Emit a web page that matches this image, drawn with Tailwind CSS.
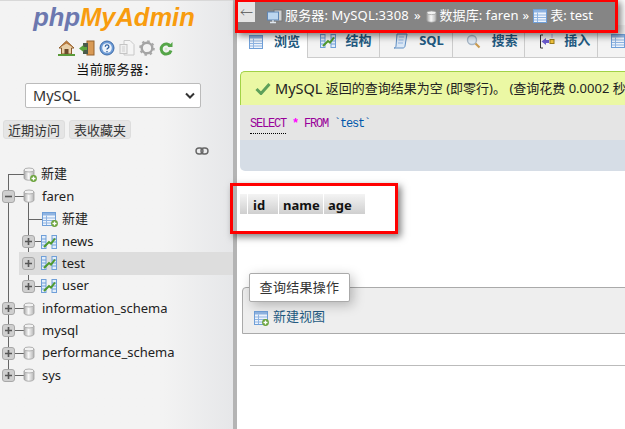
<!DOCTYPE html>
<html lang="zh-CN">
  <head>
    <meta charset="UTF-8" />
    <title>phpMyAdmin</title>
    <script src="https://cdn.jsdelivr.net/npm/@tailwindcss/browser@4"></script>
  </head>
  <body class="w-[625px] h-[429px] overflow-hidden bg-white font-['Noto_Sans','Noto_Sans_CJK_SC',sans-serif] text-[13px] text-[#222]">
    <svg class="absolute w-0 h-0">
      <defs>
        <linearGradient id="cyl" x1="0" x2="1" y1="0" y2="0">
          <stop offset="0" stop-color="#a8a8a8" /><stop offset=".45" stop-color="#f8f8f8" /><stop offset="1" stop-color="#b4b4b4" />
        </linearGradient>
        <symbol id="db" viewBox="0 0 12 14">
          <path d="M1 3v8c0 1.300 2.200 2.200 5 2.200s5-.9 5-2.200V3z" fill="url(#cyl)" stroke="#a0a0a0" stroke-width=".8" />
          <ellipse cx="6" cy="3" rx="5" ry="2" fill="#f2f2f2" stroke="#a0a0a0" stroke-width=".8" />
        </symbol>
        <symbol id="plus-badge" viewBox="0 0 7 7">
          <circle cx="3.500" cy="3.500" r="3.400" fill="#6aa33a" />
          <path d="M3.500 1.500v4M1.500 3.500h4" stroke="#fff" stroke-width="1.300" />
        </symbol>
        <symbol id="plus" viewBox="0 0 13 13">
          <rect x=".5" y=".5" width="12" height="12" rx="2.500" fill="#cfcfcf" stroke="#a8a8a8" />
          <path d="M6.500 3v7M3 6.500h7" stroke="#555" stroke-width="1.600" />
        </symbol>
        <symbol id="minus" viewBox="0 0 13 13">
          <rect x=".5" y=".5" width="12" height="12" rx="2.500" fill="#cfcfcf" stroke="#a8a8a8" />
          <path d="M3 6.500h7" stroke="#555" stroke-width="1.600" />
        </symbol>
        <symbol id="tbl-struct" viewBox="0 0 16 14">
          <rect x=".5" y=".5" width="4.500" height="13" fill="#e3eefa" stroke="#6f9fd8" />
          <rect x="11" y=".5" width="4.500" height="13" fill="#e3eefa" stroke="#6f9fd8" />
          <path d="M1 4h4M1 7h4M1 10h4M11 4h4M11 7h4M11 10h4" stroke="#6f9fd8" />
          <path d="M3 12 8 7l2 1.500 4-5" fill="none" stroke="#4f9a2c" stroke-width="2" />
        </symbol>
        <symbol id="tbl" viewBox="0 0 14 14">
          <rect x=".5" y=".5" width="13" height="13" fill="#eef4fc" stroke="#6f9fd8" />
          <path d="M1 1h12v2.500H1z" fill="#8fb4e2" />
          <path d="M1 6h12M1 8.500h12M1 11h12M4.500 3.500V13" stroke="#8fb4e2" />
        </symbol>
      </defs>
    </svg>

    <div class="flex h-[429px]">
      <!-- navigation panel -->
      <aside class="w-[233px] shrink-0 h-full bg-gradient-to-r from-[#f3f3f3] from-70% to-[#e6e7e9]">
        <div class="h-[1px] bg-[#d8d8d8]"></div>
        <div class="h-[37px] text-center font-['Liberation_Sans',sans-serif] italic font-bold text-[25.500px] leading-[33px] pr-[5px]">
          <span class="text-[#6c78af]">php</span><span class="text-[#f89c0e]">MyAdmin</span>
        </div>

        <div class="flex justify-center items-center gap-[4px] h-[16px] mt-[2px] mr-[2px]">
          <svg width="17" height="16" viewBox="0 0 17 16"><path d="M1 8 8.500 1 16 8h-2.500v6h-10V8z" fill="#e8cfa8" stroke="#8a5a2a" /><path d="M1 8 8.500 1 16 8 8.500 3.500z" fill="#b5763a" /><rect x="6.500" y="9" width="4" height="5" fill="#6b4a2a" /><path d="M0 15h17" stroke="#5a9a3a" stroke-width="2" /></svg>
          <svg width="16" height="16" viewBox="0 0 16 16"><rect x="8" y="1" width="7" height="14" fill="#d99a55" stroke="#96632c" /><rect x="4" y="3" width="5" height="11" fill="#4a5a4a" /><path d="M0 8.500 4.500 5v2H8v3H4.500v2z" fill="#5aa53c" /></svg>
          <svg width="16" height="16" viewBox="0 0 16 16"><circle cx="8" cy="8" r="7" fill="#6d9bd6" stroke="#3d6ba8" /><circle cx="8" cy="8" r="4.800" fill="#eef4fb" /><path d="M6.300 6.700a1.800 1.800 0 1 1 2.500 1.600c-.6.300-.8.600-.8 1.200M8 11v1.200" fill="none" stroke="#2e5f9e" stroke-width="1.300" /></svg>
          <svg width="16" height="16" viewBox="0 0 16 16"><path d="M5 .5h6l4 4V15H5z" fill="#f5f5f5" stroke="#c8c8c8" /><rect x="1" y="4.500" width="7" height="9" fill="#f0f0f0" stroke="#c4c4c4" /><path d="M3 7h3M3 9h3M3 11h3" stroke="#cfcfcf" /></svg>
          <svg width="16" height="16" viewBox="0 0 16 16"><circle cx="8" cy="8" r="5.300" fill="none" stroke="#a4a4a4" stroke-width="2.400" /><circle cx="8" cy="8" r="6.800" fill="none" stroke="#a8a8a8" stroke-width="2" stroke-dasharray="2.500 2.840" /></svg>
          <svg width="14" height="15" viewBox="0 0 14 15"><path d="M11.500 5.500A5 5 0 1 0 12 9.500" fill="none" stroke="#55a548" stroke-width="3" /><path d="M8.500 6h5V1z" fill="#55a548" /><circle cx="7" cy="8" r="1.500" fill="#d6ecd0" /></svg>
        </div>

        <div class="text-center text-[13px] leading-[18px] mt-[4px] text-[#111] tracking-[.4px]">当前服务器：</div>
        <div class="mx-[25px] mt-[5px] h-[25px] w-[176px] bg-white border border-[#bbb] rounded-[2px] flex items-center justify-between pl-[7px] pr-[5px] text-[#333] text-[14.500px]">
          <span>MySQL</span>
          <svg width="10" height="7" viewBox="0 0 10 7"><path d="M1 1.500 5 5.500 9 1.500" fill="none" stroke="#333" stroke-width="2" /></svg>
        </div>
        <div class="flex gap-[4px] ml-[3px] mt-[12px]">
          <span class="h-[19px] px-[4px] leading-[18px] bg-[#e5e5e5] border border-[#ddd] rounded-[3px] text-[#333]">近期访问</span>
          <span class="h-[19px] px-[4px] leading-[18px] bg-[#e5e5e5] border border-[#ddd] rounded-[3px] text-[#333]">表收藏夹</span>
        </div>
        <div class="flex justify-end pr-[24px] mt-[8px] h-[8px]">
          <svg width="14" height="8" viewBox="0 0 14 8"><rect x="1" y="1" width="7" height="6" rx="3" fill="none" stroke="#666" stroke-width="1.400" /><rect x="6" y="1" width="7" height="6" rx="3" fill="none" stroke="#666" stroke-width="1.400" /></svg>
        </div>

        <!-- database tree -->
        <div class="relative mt-[8px]">
          <svg class="absolute left-0 top-0" width="60" height="225" fill="none" stroke="#666">
            <path d="M8.500 11V212M8.500 11.500H24M15 33.500H24M28.500 33V123M28.500 56.500H42M35 78.500H41M35 100.500H41M35 123.500H41M15 145.500H24M15 167.500H24M15 190.500H24M15 212.500H24" />
          </svg>
          <div class="relative h-[22px] flex items-center pl-[23px] gap-[5px]">
            <span class="relative w-[13px] h-[14px]"><svg class="w-[12px] h-[14px]"><use href="#db" /></svg><svg class="absolute left-[7px] top-[8px] w-[7px] h-[7px]"><use href="#plus-badge" /></svg></span>
            <span>新建</span>
          </div>
          <div class="relative h-[22.500px] flex items-center pl-[2px]">
            <svg class="w-[13px] h-[13px]"><use href="#minus" /></svg>
            <svg class="w-[12px] h-[14px] ml-[8px]"><use href="#db" /></svg>
            <span class="ml-[7px]">faren</span>
          </div>
          <div class="relative h-[22.500px] flex items-center pl-[42px] gap-[5px]">
            <span class="relative w-[15px] h-[14px]"><svg class="w-[14px] h-[14px]"><use href="#tbl" /></svg><svg class="absolute left-[9px] top-[8px] w-[7px] h-[7px]"><use href="#plus-badge" /></svg></span>
            <span>新建</span>
          </div>
          <div class="relative h-[22.300px] flex items-center pl-[22px] pt-[1px]">
            <svg class="w-[13px] h-[13px]"><use href="#plus" /></svg>
            <svg class="w-[16px] h-[14px] ml-[6px]"><use href="#tbl-struct" /></svg>
            <span class="ml-[5px]">news</span>
          </div>
          <div class="relative h-[22.300px] flex items-center pl-[22px]">
            <div class="absolute left-[19px] right-0 inset-y-0 bg-[#dddddd]"></div>
            <svg class="relative w-[13px] h-[13px]"><use href="#plus" /></svg>
            <svg class="relative w-[16px] h-[14px] ml-[6px]"><use href="#tbl-struct" /></svg>
            <span class="relative ml-[5px]">test</span>
          </div>
          <div class="relative h-[22.300px] flex items-center pl-[22px] pt-[1px]">
            <svg class="w-[13px] h-[13px]"><use href="#plus" /></svg>
            <svg class="w-[16px] h-[14px] ml-[6px]"><use href="#tbl-struct" /></svg>
            <span class="ml-[5px]">user</span>
          </div>
          <div class="relative h-[22.300px] flex items-center pl-[2px] pt-[1px]">
            <svg class="w-[13px] h-[13px]"><use href="#plus" /></svg>
            <svg class="w-[12px] h-[14px] ml-[8px]"><use href="#db" /></svg>
            <span class="ml-[7px]">information_schema</span>
          </div>
          <div class="relative h-[22.300px] flex items-center pl-[2px]">
            <svg class="w-[13px] h-[13px]"><use href="#plus" /></svg>
            <svg class="w-[12px] h-[14px] ml-[8px]"><use href="#db" /></svg>
            <span class="ml-[7px]">mysql</span>
          </div>
          <div class="relative h-[22.300px] flex items-center pl-[2px] pt-[1px]">
            <svg class="w-[13px] h-[13px]"><use href="#plus" /></svg>
            <svg class="w-[12px] h-[14px] ml-[8px]"><use href="#db" /></svg>
            <span class="ml-[7px]">performance_schema</span>
          </div>
          <div class="relative h-[22.300px] flex items-center pl-[2px] pt-[1px]">
            <svg class="w-[13px] h-[13px]"><use href="#plus" /></svg>
            <svg class="w-[12px] h-[14px] ml-[8px]"><use href="#db" /></svg>
            <span class="ml-[7px]">sys</span>
          </div>
        </div>
      </aside>

      <div class="w-[4px] shrink-0 bg-[#b4b4b4]"></div>

      <!-- main pane -->
      <main class="relative flex-1 min-w-0">
        <!-- tabs -->
        <div class="flex absolute left-0 top-[24px] h-[34px] w-[388px] overflow-hidden font-bold text-[#235a81] text-[13px] pt-[1px]">
          <div class="w-[72px] bg-white border-r border-[#ccc] flex items-center pl-[12px] gap-[11px]">
            <svg class="w-[14px] h-[14px]"><use href="#tbl" /></svg><span>浏览</span>
          </div>
          <div class="w-[74px] bg-[#f3f3f3] border-r border-b border-[#ccc] flex items-center pl-[12px] gap-[10px]">
            <svg class="w-[16px] h-[14px]"><use href="#tbl-struct" /></svg><span>结构</span>
          </div>
          <div class="w-[74px] bg-[#f3f3f3] border-r border-b border-[#ccc] flex items-center pl-[13px] gap-[10px]">
            <svg width="16" height="16" viewBox="0 0 16 16"><path d="M4 1h10l-2 12c0 1-1 2-2 2H1c1 0 2-1 2-2z" fill="#dbe8f6" stroke="#5f8fc4" /><path d="M6 4h5M5.500 7h5M5 10h5" stroke="#8fb4e2" /></svg><span>SQL</span>
          </div>
          <div class="w-[74px] bg-[#f3f3f3] border-r border-b border-[#ccc] flex items-center pl-[13px] gap-[11px]">
            <svg width="15" height="15" viewBox="0 0 15 15"><circle cx="6" cy="6" r="4.500" fill="#dfeaf5" stroke="#a8b8c8" stroke-width="1.400" /><path d="m9.500 9.500 4 4" stroke="#c99a50" stroke-width="2.200" /></svg><span>搜索</span>
          </div>
          <div class="w-[74px] bg-[#f3f3f3] border-r border-b border-[#ccc] flex items-center pl-[15px] gap-[9px]">
            <svg width="15" height="15" viewBox="0 0 15 15"><path d="M3 1H0.500v13H3" fill="none" stroke="#333" /><path d="M1.500 7.500 6 4v2h3v3H6v2z" fill="#6a5acd" /><rect x="10" y="5.500" width="4" height="4" fill="#f3c43c" stroke="#9a7a1a" /><path d="M12 0.500v3" stroke="#6a5acd" stroke-dasharray="1 1" /></svg><span>插入</span>
          </div>
          <div class="flex-1 bg-[#f3f3f3] border-b border-[#ccc] flex items-center pl-[13px]">
            <svg class="w-[14px] h-[14px] shrink-0"><use href="#tbl" /></svg>
          </div>
        </div>

        <!-- breadcrumb, hilighted in red on the screenshot -->
        <div class="absolute left-[-2px] top-[-1px] w-[383px] h-[34px] border-[3px] border-[#f00] shadow-[3px_3px_7px_rgba(0,0,0,.5)] bg-[#858585] flex items-center text-white text-[13px] z-10">
          <span class="absolute left-0 top-0 h-[20px] w-[17px] bg-[#e4e4e4] text-[#555] leading-[20px] text-center font-light">←</span>
          <svg class="ml-[29px] mt-[1px] shrink-0" width="16" height="15" viewBox="0 0 16 15"><rect x="7" y="1" width="8" height="11" fill="#d0d0d0" stroke="#777" /><rect x=".5" y="3" width="11" height="8" fill="#bcd6f0" stroke="#5f86b5" /><path d="M3 13.500h6M6 11v2" stroke="#dfe7ef" stroke-width="1.300" /></svg>
          <span class="ml-[2px] tracking-[.15px]">服务器: MySQL:3308</span><span class="mx-[5px]">»</span>
          <svg class="w-[11px] h-[13px] mr-[3px]"><use href="#db" /></svg>
          <span class="tracking-[.1px]">数据库: faren</span><span class="mx-[4px]">»</span>
          <svg class="w-[14px] h-[14px] mr-[3px]"><use href="#tbl" /></svg>
          <span>表: test</span>
        </div>

        <!-- result message -->
        <div class="absolute left-[3px] w-[385px] top-[71px]">
          <div class="h-[34px] bg-[#ebf8a4] border-l border-t border-[#a2d246] rounded-tl-[5px] flex items-center pl-[14px] whitespace-nowrap overflow-hidden text-[13px] text-[#222]">
            <svg class="mr-[4px] shrink-0" width="16" height="13" viewBox="0 0 16 13"><path d="M1.500 7 6 11.500 14.500 2" fill="none" stroke="#5ea05a" stroke-width="3" /></svg>
            <span class="text-[14.500px]">MySQL</span>&nbsp;返回的查询结果为空 (即零行)。 (查询花费 0.0002 秒
          </div>
          <div class="h-[35px] bg-[#e5e5e5] flex items-center pl-[10px] pt-[3px] font-['Liberation_Mono',monospace] text-[12px] tracking-[-1.200px] text-[#0055aa] whitespace-pre">
            <span class="text-[#990099] border-b border-dotted border-black">SELECT</span><span> </span><span class="text-[#ff00ff] font-bold">*</span><span> </span><span class="text-[#990099]">FROM</span><span> `test`</span>
          </div>
          <div class="h-[31px] bg-[#d6dde6] rounded-bl-[5px]"></div>
        </div>

        <!-- result table header, framed in red on the screenshot -->
        <div class="absolute left-[-7px] top-[183px] w-[168px] h-[51px] border-[3px] border-[#f00] shadow-[3px_3px_7px_rgba(0,0,0,.5)] z-10 pl-[7px] pt-[8px]">
          <div class="flex gap-[1px] h-[20px] font-bold text-[#111] text-[13px] leading-[22px]">
            <div class="w-[7px] bg-gradient-to-b from-[#f4f4f4] to-[#cfcfcf]"></div>
            <div class="w-[30px] pl-[5px] bg-gradient-to-b from-[#f4f4f4] to-[#cfcfcf]">id</div>
            <div class="w-[44px] pl-[4px] bg-gradient-to-b from-[#f4f4f4] to-[#cfcfcf]">name</div>
            <div class="w-[41px] pl-[4px] bg-gradient-to-b from-[#f4f4f4] to-[#cfcfcf]">age</div>
          </div>
        </div>

        <!-- query result operations -->
        <div class="absolute left-[5px] w-[390px] top-[287px] h-[47px] bg-[#eeeeee] border border-[#aaa] rounded-tl-[4px] flex items-end pl-[11px] pb-[7px]">
          <span class="relative w-[15px] h-[15px] mr-[4px]"><svg class="w-[14px] h-[14px]"><use href="#tbl" /></svg><svg class="absolute left-[8px] top-[8px] w-[7px] h-[7px]"><use href="#plus-badge" /></svg></span>
          <span class="text-[#235a81]">新建视图</span>
        </div>
        <div class="absolute left-[12px] top-[273px] w-[101px] h-[29px] bg-white border border-[#aaa] rounded-[2px] shadow-[3px_3px_12px_rgba(0,0,0,.25)] flex items-center justify-center text-[#333] tracking-[.3px]">查询结果操作</div>

        <div class="absolute left-[13px] right-0 top-[365px] h-[1px] bg-[#bbbbbb]"></div>
      </main>
    </div>
  </body>
</html>
